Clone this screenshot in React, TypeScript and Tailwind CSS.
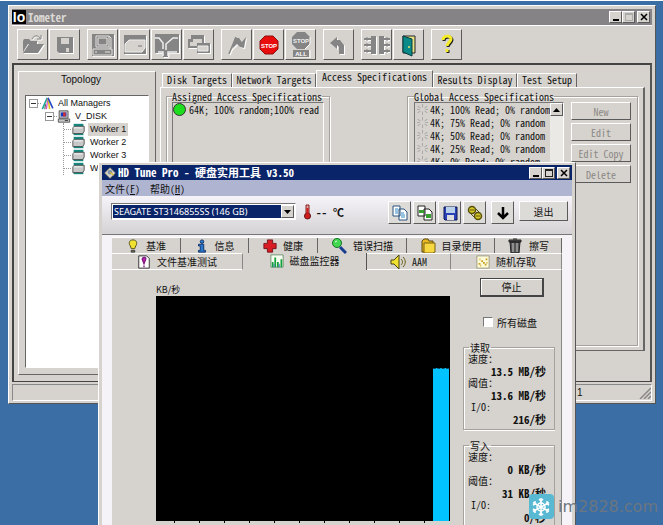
import React from 'react';

const raised = 'border border-t-white border-l-white border-b-[#5a5a5a] border-r-[#5a5a5a]';
const group = 'border border-[#a5a29d] shadow-[1px_1px_0_#fff,inset_1px_1px_0_#fff]';
const mono = "font-['Noto_Sans_Mono_CJK_SC','Liberation_Mono',monospace]";

interface IconProps {
  children: React.ReactNode;
  size?: string;
}

function Icon({ children, size = 'h-4 w-4' }: IconProps) {
  return (
    <svg viewBox="0 0 16 16" className={`shrink-0 ${size}`} fill="none">{children}</svg>
  );
}

// disabled toolbar glyph: grey drawing with a white copy one pixel down-right
function Disabled({ children }: { children: React.ReactNode }) {
  return (
    <svg viewBox="0 0 26 26" className="h-[26px] w-[26px]">
      <g transform="translate(1 1)" fill="#fff" stroke="#fff">{children}</g>
      <g fill="#858585" stroke="#858585">{children}</g>
    </svg>
  );
}

function ToolButton({ label, children }: { label: string; children: React.ReactNode }) {
  return (
    <button aria-label={label} className={`flex h-[31px] w-[31px] items-center justify-center ${raised}`}>{children}</button>
  );
}

function WindowButtons({ fixed = false }: { fixed?: boolean }) {
  return (
    <div className="flex items-center">
      <button aria-label="Minimize" className={`flex h-3 w-[13px] items-end justify-center bg-[#d6d3ce] pb-px ${raised}`}>
        <span className="h-0.5 w-1.5 bg-black" />
      </button>
      <button aria-label="Maximize" disabled={fixed} className={`flex h-3 w-[13px] items-center justify-center bg-[#d6d3ce] ${raised}`}>
        <span className={`h-2 w-2 border border-t-2 ${fixed ? 'border-[#aaa]' : 'border-[#222]'}`} />
      </button>
      <button aria-label="Close" className={`ml-0.5 flex h-3 w-[13px] items-center justify-center bg-[#d6d3ce] ${raised}`}>
        <svg viewBox="0 0 8 8" className="h-2 w-2"><path d="M1 1l6 6M7 1L1 7" stroke="#000" strokeWidth="1.5" /></svg>
      </button>
    </div>
  );
}

function Toolbar() {
  return (
    <div className="flex h-[38px] items-center gap-[7px] border-t border-white pl-[5px]">
      <div className="flex gap-px">
        <ToolButton label="Open">
          <Disabled>
            <path d="M3 20V9l1-2h5l2 2h6v3H8z" stroke="none" />
            <path d="M3 21l6-9h15l-6 9z" stroke="none" />
            <path d="M12 7c2-4 6-4 8-1M21 3v4h-4" fill="none" />
          </Disabled>
        </ToolButton>
        <ToolButton label="Save">
          <Disabled>
            <path d="M5 5h16v16H7l-2-2z" stroke="none" />
            <path d="M9 6h8v6H9z" fill="#d6d3ce" stroke="none" />
            <path d="M14 16h3v4h-3z" fill="#d6d3ce" stroke="none" />
          </Disabled>
        </ToolButton>
      </div>
      <div className="flex gap-px">
        <ToolButton label="New manager">
          <Disabled>
            <path d="M2 2h22v22H2z" stroke="none" />
            <g fill="none" stroke="#e6e4e0">
              <path d="M6 4h13v11H6zM8 6h9v7H8zM19 4l2 2v10h-2M3 17h19v6H3z" />
              <path d="M5 20h2M15 20h5" />
            </g>
          </Disabled>
        </ToolButton>
        <ToolButton label="New disk worker">
          <Disabled>
            <path d="M2 3h22v19H2z" stroke="none" />
            <path d="M3 12l4-4h16v8l-3 4H3z" fill="#d6d3ce" stroke="#eee" />
            <path d="M16 14h4" stroke="#777" />
          </Disabled>
        </ToolButton>
        <ToolButton label="New network worker">
          <Disabled>
            <path d="M1 2h24v19H14v4H9v-4H1z" stroke="none" />
            <path d="M1 6h4l4 5v6M24 6h-5l-7 6v6M4 20h5v4M23 20h-9v4" fill="none" stroke="#eee" strokeWidth="1.5" />
          </Disabled>
        </ToolButton>
        <ToolButton label="Duplicate worker">
          <Disabled>
            <path d="M6 4h11v8H6zM3 8h9v7H3z" strokeWidth="2" />
            <path d="M7 7h9v4H7z" fill="#d6d3ce" stroke="none" />
            <path d="M4 10h7v4H4z" fill="#d6d3ce" stroke="none" />
            <path d="M12 12h11v8H12z" strokeWidth="2" />
            <path d="M12 14h10v5H12z" fill="#d6d3ce" stroke="#eee" />
          </Disabled>
        </ToolButton>
      </div>
      <div className="flex gap-px">
        <ToolButton label="Start tests">
          <Disabled>
            <path d="M11 6h4l3 4 4-5-2 11-4-1-3-3-5 5z" stroke="none" />
            <path d="M12 5L5 22" strokeWidth="1.500" />
          </Disabled>
        </ToolButton>
        <ToolButton label="Stop test">
          <svg viewBox="0 0 26 26" className="h-[26px] w-[26px]">
            <path d="M9 4h8l5 5v8l-5 5H9l-5-5V9z" fill="#e80c0c" stroke="#8c1010" />
            <text x="13" y="16" textAnchor="middle" fontSize="6" fontWeight="700" fontFamily="Liberation Sans" fill="#fff">STOP</text>
          </svg>
        </ToolButton>
        <ToolButton label="Stop all tests">
          <svg viewBox="0 0 26 26" className="h-[26px] w-[26px]">
            <path d="M9 0h8l5 5v7l-5 5H9l-5-5V5zM5 18h16v7H5z" fill="#858585" />
            <path d="M22 5v7l-5 5M22 18v8H6" fill="none" stroke="#fff" />
            <text x="13" y="11" textAnchor="middle" fontSize="6" fontWeight="700" fontFamily="Liberation Sans" fill="#eee">STOP</text>
            <text x="13" y="24" textAnchor="middle" fontSize="6" fontWeight="700" fontFamily="Liberation Sans" fill="#fff">ALL</text>
          </svg>
        </ToolButton>
      </div>
      <ToolButton label="Reset workers">
        <Disabled>
          <path d="M4 11l7-6v3h3l4 5v9h-5v-7l-2-2v4z" stroke="none" />
        </Disabled>
      </ToolButton>
      <div className="flex gap-px">
        <ToolButton label="Access specs">
          <Disabled>
            <path d="M7 4h5v18H7zM15 4h5v18h-5z" stroke="none" />
            <path d="M0 7h8M0 13h8M0 19h8M19 7h7M19 13h7M19 19h7" strokeWidth="2" />
            <path d="M3 5v4M3 11v4M3 17v4M23 5v4M23 11v4M23 17v4" />
          </Disabled>
        </ToolButton>
        <ToolButton label="Exit">
          <svg viewBox="0 0 26 26" className="h-[26px] w-[26px]">
            <path d="M7 4h12v17H7z" fill="#e8e48a" stroke="#222" />
            <path d="M7 4l9 3v17l-9-4z" fill="#0a8a88" stroke="#063c3c" />
            <path d="M13 14v2" stroke="#f3e66a" strokeWidth="1.5" />
          </svg>
        </ToolButton>
      </div>
      <ToolButton label="Help">
        <svg viewBox="0 0 26 26" className="h-[26px] w-[26px]" fill="none">
          <path d="M10 9c0-5 8-5 8-1 0 3-4 4-4 7M14 18v3" stroke="#222" strokeWidth="3" />
          <path d="M9 8c0-5 8-5 8-1 0 3-4 4-4 7M13 17v3" stroke="#f4ec28" strokeWidth="3" />
        </svg>
      </ToolButton>
    </div>
  );
}

function Expander() {
  return (
    <span className="flex h-[9px] w-[9px] items-center justify-center border border-[#999]">
      <span className="h-px w-[5px] bg-[#333]" />
    </span>
  );
}

function Topology() {
  return (
    <section className="flex w-[138px] flex-col border border-t-white border-l-white border-b-[#666] border-r-[#666] px-1.5 pb-1.5">
      <h2 className="pr-3 pb-2 text-center text-[10px] leading-[15px]">Topology</h2>
      <ul className="flex-1 border border-t-[#666] border-l-[#666] border-b-white border-r-white bg-white pt-px pl-[3px] text-[9px] leading-[13px]">
        <li>
          <div className="flex items-center">
            <Expander />
            <span className="w-[3px] border-t border-dotted border-[#999]" />
            <Icon size="h-[13px] w-[14px]">
              <path d="M7 1L1 15" stroke="#28a89c" strokeWidth="2" />
              <path d="M8 1L6 15" stroke="#d04ac8" strokeWidth="1.5" />
              <path d="M8 1l2 14" stroke="#e4c820" strokeWidth="2" />
              <path d="M8 1l6 13" stroke="#2848c8" strokeWidth="2" />
              <path d="M5 9l-1 6" stroke="#222" />
            </Icon>
            <span className="ml-[3px]">All Managers</span>
          </div>
          <ul>
            <li className="pl-4">
              <div className="flex items-center">
                <Expander />
                <span className="w-[3px] border-t border-dotted border-[#999]" />
                <Icon size="h-[13px] w-[14px]">
                  <path d="M2 1h11v9H2zM1 11h14v4H1z" fill="#c8c8c8" stroke="#444" />
                  <path d="M4 3h7v5H4z" fill="#183cc0" />
                  <path d="M7 3h3v5H7z" fill="#d83030" />
                  <path d="M9 13h4" stroke="#222" />
                </Icon>
                <span className="ml-1">V_DISK</span>
              </div>
              <ul className="ml-[18px] border-l border-dotted border-[#999]">
                {['Worker 1', 'Worker 2', 'Worker 3', 'Worker 4'].map((name, i) => (
                  <li key={name} className="flex h-[13px] items-center">
                    <span className="w-[7px] border-t border-dotted border-[#999]" />
                    <Icon size="h-[13px] w-[15px]">
                      <path d="M2 1h12v14H2z" fill="#168a80" />
                      <path d="M1 6l2-2h12v6l-2 3H1z" fill="#c8c8c8" stroke="#444" />
                      <path d="M2 6h11" stroke="#fff" />
                    </Icon>
                    <span className={i === 0 ? 'ml-0.5 bg-[#d6d3ce] px-0.5' : 'ml-0.5 px-0.5'}>{name}</span>
                  </li>
                ))}
              </ul>
            </li>
          </ul>
        </li>
      </ul>
    </section>
  );
}

const specs = [
  '4K; 100% Read; 0% random',
  '4K; 75% Read; 0% random',
  '4K; 50% Read; 0% random',
  '4K; 25% Read; 0% random',
  '4K; 0% Read; 0% random',
];

const specTabs = [
  { name: 'Disk Targets', width: 'w-[70px]' },
  { name: 'Network Targets', width: 'w-[84px]' },
  { name: 'Access Specifications', width: 'w-[117px]' },
  { name: 'Results Display', width: 'w-[84px]' },
  { name: 'Test Setup', width: 'w-[60px]' },
];

function AccessSpecs() {
  return (
    <section className={`flex min-w-0 flex-1 flex-col text-[10px] ${mono}`}>
      <div role="tablist" className="flex h-4 items-end pl-0.5">
        {specTabs.map((tab) => {
          const active = tab.name === 'Access Specifications';
          return (
            <button
              key={tab.name}
              role="tab"
              aria-selected={active}
              className={`${tab.width} flex shrink-0 justify-center whitespace-nowrap border-t border-l border-r border-t-white border-l-white border-r-[#666] leading-[11px] ${active ? 'h-[17px]' : 'h-3.5'}`}
            >
              {tab.name}
            </button>
          );
        })}
      </div>
      <div className="flex flex-1 items-stretch border border-r-2 border-t-white border-l-white border-b-[#666] border-r-[#666] pt-[3px] pr-[5px] pb-1 pl-[5px]">
        <fieldset className={`flex w-[164px] flex-col px-[5px] ${group}`}>
          <legend className="whitespace-nowrap leading-[11px]">Assigned Access Specifications</legend>
          <ul className="flex-1 border border-t-[#777] border-l-[#777] border-b-white border-r-white leading-[13px]">
            <li className="flex items-center whitespace-nowrap">
              <span className="mr-[3px] h-[13px] w-[13px] shrink-0 rounded-full border border-[#333] bg-[#1edc1e]" />
              64K; 100% random;100% read
            </li>
          </ul>
        </fieldset>
        <fieldset className={`ml-[77px] flex min-w-0 flex-1 flex-col px-1.5 ${group}`}>
          <legend className="whitespace-nowrap leading-[11px]">Global Access Specifications</legend>
          <div className="flex flex-1 gap-[7px]">
            <div className="flex w-[150px] border border-t-[#777] border-l-[#777] border-b-white border-r-white">
              <ul className="flex-1 overflow-hidden pl-0.5 leading-[13px]">
                {specs.map((spec) => (
                  <li key={spec} className="flex items-center gap-0.5 whitespace-nowrap">
                    <Icon size="h-[11px] w-[11px]">
                      <path d="M8 0v5M8 11v5M1 3l4 3M11 10l4 3M1 13l4-3M11 6l4-3M0 8h4M12 8h4" stroke="#aaa" strokeWidth="1.5" />
                    </Icon>
                    {spec}
                  </li>
                ))}
              </ul>
              <div className="w-[13px] shrink-0 bg-[#ebe9e5]">
                <button aria-label="Scroll up" className={`flex h-[13px] w-full items-center justify-center bg-[#d6d3ce] ${raised}`}>
                  <svg viewBox="0 0 7 4" className="h-1 w-[7px]"><path d="M0 4l3.500-4L7 4z" /></svg>
                </button>
              </div>
            </div>
            <div className="flex flex-1 flex-col gap-[3px]">
              {['New', 'Edit', 'Edit Copy', 'Delete'].map((name) => (
                <button key={name} disabled className={`h-[18px] leading-[15px] text-[#8b8985] ${raised}`}>{name}</button>
              ))}
            </div>
          </div>
        </fieldset>
      </div>
    </section>
  );
}

function Iometer() {
  return (
    <div className="absolute top-1 right-[7px] bottom-[121px] left-2 flex flex-col border border-t-white border-l-white border-b-[#555] border-r-[#555] bg-[#d6d3ce] px-[3px] pt-[3px]">
      <header className={`flex h-4 shrink-0 items-center bg-[#858385] pr-0.5 text-[11px] font-bold text-[#dcdad6] ${mono}`}>
        <span className="mr-0.5 flex h-3.5 w-3.5 items-center justify-center bg-black font-['Liberation_Sans',sans-serif] text-[14px] text-white">Io</span>
        <span className="flex-1">Iometer</span>
        <WindowButtons fixed />
      </header>
      <Toolbar />
      <main className="flex min-h-0 flex-1 gap-1 border-2 border-[#444] border-r-[#555] border-b border-b-[#444] pt-1.5 pr-[5px] pl-1">
        <div className="flex pb-1.5"><Topology /></div>
        <div className="flex min-w-0 flex-1 pb-[30px]"><AccessSpecs /></div>
      </main>
      <footer className="mt-0.5 mb-0.5 flex h-[17px] items-center justify-between border border-t-[#888] border-l-[#888] border-b-white border-r-white pl-[564px] text-[10px]">
        <span>1</span>
        <svg viewBox="0 0 12 12" className="h-3 w-3"><path d="M1 12L12 1M5 12l7-7M9 12l3-3" stroke="#888" strokeWidth="1.500" /></svg>
      </footer>
    </div>
  );
}

const drawings = {
  bulb: (
    <Icon size="h-4 w-3.5">
      <path d="M8 1c5 0 5 5 3 7l-1 3H6L5 8C3 6 3 1 8 1z" fill="#f0e030" stroke="#4a4410" />
      <path d="M6 13h4v2H6z" fill="#776" stroke="#333" />
    </Icon>
  ),
  info: (
    <Icon size="h-4 w-3.5">
      <circle cx="8" cy="3" r="2" fill="#2878d0" stroke="#0c2c60" />
      <path d="M4 6h6v7h2v2H4v-2h2V8H4z" fill="#2878d0" stroke="#0c2c60" />
    </Icon>
  ),
  health: (
    <Icon size="h-3.5 w-3.5"><path d="M5 1h6v4h4v6h-4v4H5v-4H1V5h4z" fill="#d81c24" stroke="#701014" /></Icon>
  ),
  scan: (
    <Icon size="h-4 w-4">
      <path d="M9 9l6 6" stroke="#183c90" strokeWidth="3" />
      <circle cx="6" cy="5" r="4.500" fill="#44d850" stroke="#147428" />
      <path d="M4 4l2-1" stroke="#dfe" />
    </Icon>
  ),
  folder: (
    <Icon size="h-4 w-4">
      <path d="M2 3l2-2h4l1 2h4v11H2z" fill="#e8b820" stroke="#5c4810" />
      <path d="M4 5h11v9l-2 1H4z" fill="#f8d840" stroke="#7c6010" />
    </Icon>
  ),
  trash: (
    <Icon size="h-4 w-4">
      <path d="M3 4h10l-1 11H4zM2 2h12v2H2zM6 1h4" fill="#555" stroke="#222" />
      <path d="M6 5v9M10 5v9" stroke="#ccc" />
    </Icon>
  ),
  fileTest: (
    <Icon size="h-3.5 w-3.5">
      <path d="M2 1h9l3 3v11H2z" fill="#fff" stroke="#222" />
      <path d="M6 5c0-3 5-3 4 0L8 10zM8 12v2" fill="#b828b0" stroke="#801880" strokeWidth="1.500" />
    </Icon>
  ),
  monitor: (
    <Icon size="h-3.5 w-3.5">
      <path d="M1 1h14v14H1z" fill="#f4fff0" stroke="#6a8c6a" />
      <path d="M2 15V9h2v6zM5 15V4h2v11zM8 15V9h2v6zM12 15V6h2v9z" fill="#16a03c" />
      <path d="M4 15v-4h1v4zM10 15v-4h1v4z" fill="#3070c0" />
    </Icon>
  ),
  speaker: (
    <Icon size="h-4 w-4">
      <path d="M1 6h3l5-5v14l-5-5H1z" fill="#f0e030" stroke="#4a4410" />
      <path d="M11 5c2 2 2 4 0 6M13 3c3 3 3 7 0 10" stroke="#665a10" />
    </Icon>
  ),
  random: (
    <Icon size="h-3.5 w-3.5">
      <path d="M1 1h14v14H1z" fill="#fdfbd8" stroke="#99927a" />
      <path d="M3 10h2M6 7h2M10 11h2M11 5h2M5 12h1M8 9h2M12 9h1M4 5h1" stroke="#c8a020" strokeWidth="2" />
    </Icon>
  ),
};

const upperTabs = [
  { name: '基准', icon: drawings.bulb, width: 'w-[69px]' },
  { name: '信息', icon: drawings.info, width: 'w-[68px]' },
  { name: '健康', icon: drawings.health, width: 'w-[69px]' },
  { name: '错误扫描', icon: drawings.scan, width: 'w-[89px]' },
  { name: '目录使用', icon: drawings.folder, width: 'w-[88px]' },
  { name: '擦写', icon: drawings.trash, width: 'flex-1' },
];

const lowerTabs = [
  { name: '文件基准测试', icon: drawings.fileTest, width: 'w-[131px]' },
  { name: '磁盘监控器', icon: drawings.monitor, width: 'w-[124px]' },
  { name: 'AAM', icon: drawings.speaker, width: 'w-[84px]' },
  { name: '随机存取', icon: drawings.random, width: 'flex-1' },
];

const fileButtons = [
  {
    name: '复制文本',
    icon: (
      <Icon>
        <path d="M1 1h7v10H1zM7 4h5l3 3v8H7z" fill="#fff" stroke="#28507c" />
        <path d="M3 4h3M3 6h3M3 8h3M9 8h3M9 10h4M9 12h4" stroke="#3088c8" />
      </Icon>
    ),
  },
  {
    name: '复制图像',
    icon: (
      <Icon>
        <path d="M1 1h7v10H1zM7 4h5l3 3v8H7z" fill="#fff" stroke="#222" />
        <path d="M2 5h5v3H2zM9 9h5v4H9z" fill="#38a030" />
      </Icon>
    ),
  },
  {
    name: '保存',
    icon: (
      <Icon>
        <path d="M2 2h13v13H3l-1-1z" fill="#2840b8" stroke="#101850" />
        <path d="M4 2h9v6H4z" fill="#b8d0e8" />
        <path d="M5 10h7v5H5z" fill="#ddd" />
      </Icon>
    ),
  },
  {
    name: '选项',
    icon: (
      <Icon>
        <circle cx="5" cy="5" r="3.500" fill="#d8c828" stroke="#58500c" strokeWidth="1.500" />
        <circle cx="11" cy="11" r="3.500" fill="#d8c828" stroke="#58500c" strokeWidth="1.500" />
        <path d="M3 5h4M9 11h4M4 9l3 3M9 4l3 3" stroke="#58500c" />
      </Icon>
    ),
  },
];

interface StatsProps {
  title: string;
  speed: string;
  threshold: string;
  io: string;
}

function Stats({ title, speed, threshold, io }: StatsProps) {
  return (
    <fieldset className={`shrink-0 px-1 pb-1 ${group}`}>
      <legend className="ml-px px-px text-[10px] leading-[11px]">{title}</legend>
      <dl className={`text-[10px] leading-3 ${mono}`}>
        <dt>速度：</dt>
        <dd className="pr-1 text-right text-[11px] font-bold">{speed}</dd>
        <dt>阈值：</dt>
        <dd className="pr-1 text-right text-[11px] font-bold">{threshold}</dd>
        <dt className="pl-[3px]">I/O:</dt>
        <dd className="pr-1 text-right text-[11px] font-bold">{io}</dd>
      </dl>
    </fieldset>
  );
}

function HdTune() {
  return (
    <div className="absolute top-[161px] right-[87px] bottom-0 left-[98px] flex flex-col overflow-hidden border-t border-r border-l border-t-white border-l-white border-r-[#555] bg-[#d6d3ce] px-[3px] pt-0.5 font-['Noto_Sans_CJK_SC',sans-serif]">
      <header className={`flex h-[15px] shrink-0 items-center bg-[#0a246a] pr-0.5 text-[11px] font-bold text-white ${mono}`}>
        <Icon size="mx-0.5 h-3.5 w-3">
          <path d="M1 8l7-7 7 7-7 7z" fill="#d8d4c8" stroke="#aaa078" />
          <circle cx="8" cy="7" r="3" fill="#7890a8" />
          <path d="M8 7l5 4" stroke="#e0b840" strokeWidth="2" />
        </Icon>
        <span className="flex-1 whitespace-nowrap">HD Tune Pro - 硬盘实用工具 v3.50</span>
        <WindowButtons />
      </header>
      <nav className="flex h-4 shrink-0 items-center gap-2.5 bg-[#afb5d1] pl-[3px] text-[10px]">
        <button>文件<span className={mono}>(<u>F</u>)</span></button>
        <button>帮助<span className={mono}>(<u>H</u>)</span></button>
      </nav>
      <div className="flex h-[39px] shrink-0 items-start border-b border-[#777] bg-linear-to-b from-[#f6f4f9] to-[#d4d2d4] px-1 pt-[5px] pl-[9px]">
        <div className="relative mt-0.5 w-[185px] border border-t-[#777] border-l-[#777] border-b-white border-r-white bg-white p-px">
          <select aria-label="Drive" className="block h-[13px] w-[168px] appearance-none bg-[#0a246a] pl-px font-['Noto_Sans',sans-serif] text-[9px] leading-[13px] text-white">
            <option>SEAGATE ST3146855SS (146 GB)</option>
          </select>
          <span className={`pointer-events-none absolute top-px right-px flex h-[13px] w-[13px] items-center justify-center bg-[#d6d3ce] ${raised}`}>
            <svg viewBox="0 0 7 4" className="h-1 w-[7px]"><path d="M0 0h7L3.500 4z" /></svg>
          </span>
        </div>
        <div className="ml-1 flex h-[22px] items-center text-[11px] font-bold">
          <Icon>
            <path d="M6 1h3v8H6z" fill="#e8a0a0" stroke="#802020" />
            <circle cx="7.500" cy="12" r="3" fill="#d01c1c" stroke="#601010" />
            <path d="M7.500 4v8" stroke="#d01c1c" strokeWidth="2" />
          </Icon>
          <span className={mono}>--</span>
          <span className="ml-1.5">℃</span>
        </div>
        <div className="ml-auto flex gap-0.5">
          {fileButtons.map((b) => (
            <button key={b.name} aria-label={b.name} className={`flex h-[23px] w-[23px] items-center justify-center bg-[#dddbd8] ${raised}`}>{b.icon}</button>
          ))}
        </div>
        <button aria-label="最小化" className={`ml-[5px] flex h-[23px] w-[23px] items-center justify-center bg-[#dddbd8] ${raised}`}>
          <Icon><path d="M8 2v11M3 8l5 5 5-5" stroke="#000" strokeWidth="2.500" /></Icon>
        </button>
        <button className={`ml-[5px] h-5 w-[49px] bg-[#dddbd8] text-[10px] leading-[17px] ${raised}`}>退出</button>
      </div>
      <div className="flex min-h-0 flex-1 flex-col bg-[#f6f3f8] px-2.5 pt-0.5 text-[10px]">
        <div role="tablist" className="shrink-0 bg-[#d6d3ce]">
          <div className="flex h-4 border-t border-white">
            {upperTabs.map((tab) => (
              <button key={tab.name} role="tab" aria-selected={false} className={`flex items-center justify-center gap-1.5 border-r border-[#666] ${tab.width}`}>
                {tab.icon}{tab.name}
              </button>
            ))}
          </div>
          <div className="flex h-[17px]">
            {lowerTabs.map((tab) => {
              const active = tab.name === '磁盘监控器';
              return (
                <button
                  key={tab.name}
                  role="tab"
                  aria-selected={active}
                  className={`flex items-center justify-center gap-1.5 border-r ${tab.width} ${active ? 'border-r-[#555] pb-0.5' : 'border-t border-b border-t-white border-b-white border-r-[#888]'}`}
                >
                  {tab.icon}{tab.name === 'AAM' ? <span className={mono}>AAM</span> : tab.name}
                </button>
              );
            })}
          </div>
        </div>
        <div className="flex min-h-0 flex-1 gap-[13px] border-r border-[#888] bg-[#d6d3ce] pr-1.5 pl-11">
          <div className="flex min-w-0 flex-1 flex-col pt-3.5">
            <p className="h-3 text-[9px] leading-3">KB/秒</p>
            <div className="flex flex-1 items-end justify-end bg-black pr-px">
              <div className="h-[68%] w-4 border-t border-dashed border-[#0a4a60] bg-[#00c3ff]" />
            </div>
            <div className="flex h-1 shrink-0 gap-6 overflow-hidden pl-[18px]">
              {Array.from({ length: 11 }, (_, i) => (
                <span key={i} className="h-0.5 w-px shrink-0 bg-black" />
              ))}
            </div>
          </div>
          <div className="flex w-[92px] flex-col overflow-hidden pt-2">
            <button className="ml-[17px] h-[19px] w-16 shrink-0 border border-r-2 border-b-2 border-[#444] leading-4 shadow-[inset_1px_1px_0_#fff]">停止</button>
            <label className="mt-[19px] ml-5 flex h-3 shrink-0 items-center gap-1">
              <input type="checkbox" className="h-2.5 w-2.5 appearance-none border border-t-[#777] border-l-[#777] border-b-white border-r-white bg-white" />
              所有磁盘
            </label>
            <div className="mt-3.5 flex flex-col gap-2.5">
              <Stats title="读取" speed="13.5 MB/秒" threshold="13.6 MB/秒" io="216/秒" />
              <Stats title="写入" speed="0 KB/秒" threshold="31 KB/秒" io="0/秒" />
            </div>
          </div>
        </div>
      </div>
    </div>
  );
}

export default function App() {
  return (
    <div className="relative h-screen overflow-hidden border-t border-white bg-[#3a6ea5] font-['Liberation_Sans','Noto_Sans_CJK_SC',sans-serif] text-[#111]">
      <Iometer />
      <HdTune />
      <div className="absolute right-[5px] bottom-1.5 flex items-center gap-1 font-['DejaVu_Sans',sans-serif] text-base leading-[25px] text-[#6b7680]">
        <span className="flex h-[25px] w-[25px] items-center justify-center rounded-sm bg-[#59b9d2]">
          <svg viewBox="0 0 20 20" className="h-5 w-5" fill="none" stroke="#fff" strokeWidth="1.500">
            <path d="M10 1v18M2 5.500l16 9M2 14.500l16-9" />
            <circle cx="10" cy="10" r="4" />
            <path d="M8 2l2 2 2-2M8 18l2-2 2 2M2 8l2-1V4M18 8l-2-1V4M2 12l2 1v3M18 12l-2 1v3" />
          </svg>
        </span>
        im2828.com
      </div>
    </div>
  );
}
